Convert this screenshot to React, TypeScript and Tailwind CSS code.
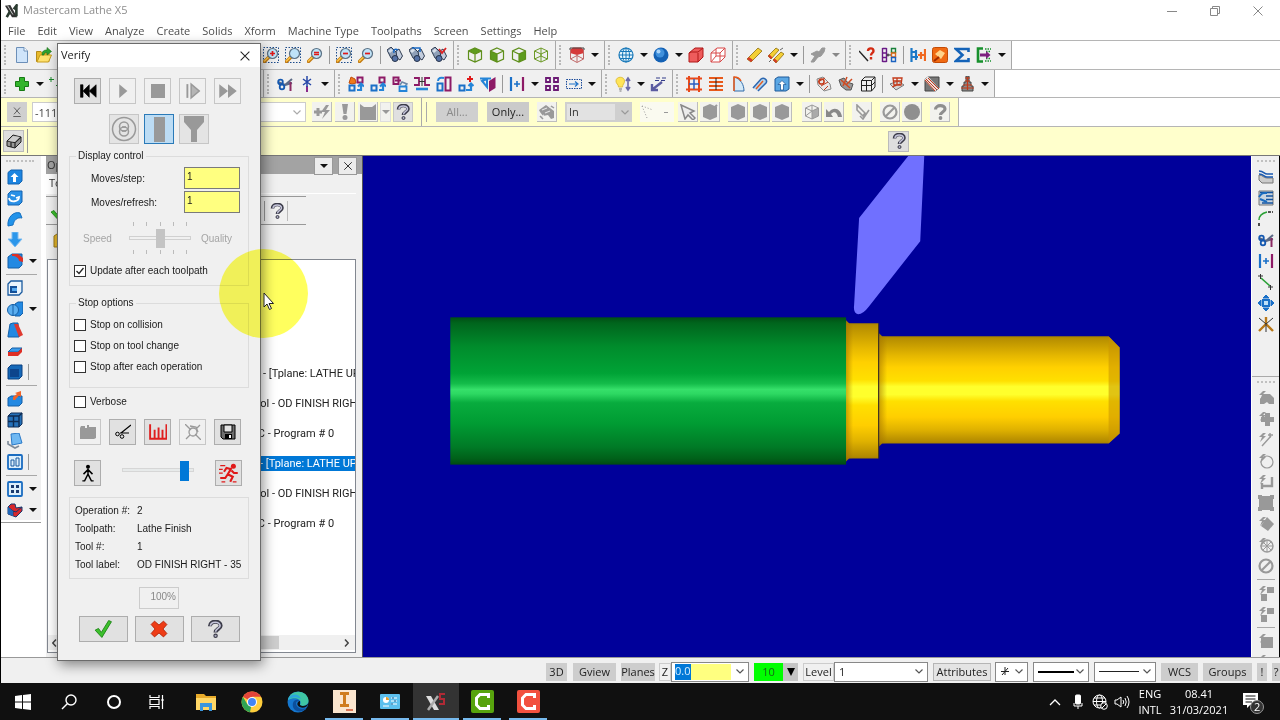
import React from 'react';

const segoe = "font-['Open_Sans','Noto_Sans',sans-serif]";

const magnifier = (
	<>
		<path d="M1.5 14.5 6 10" stroke="#c47b12" strokeWidth="3.4" strokeLinecap="round" />
		<path d="M1.5 14 5.6 10" stroke="#ffc94a" strokeWidth="1.4" strokeLinecap="round" />
		<circle cx="9.5" cy="6.5" r="5" fill="#bfe2f7" stroke="#5b7184" strokeWidth="1.2" />
	</>
);
const dottedBox = (
	<rect x=".5" y=".5" width="15" height="15" stroke="#1c4c8c" strokeDasharray="1.5 1.5" />
);
const cubeLines = 'M8 1 14.5 4V12L8 15 1.5 12V4ZM1.5 4 8 7 14.5 4M8 7V15';
const binoculars = (
	<>
		<path d="M0 3 4 0 11 7 9 13 4 11Z" fill="#8fa0b8" stroke="#2f3c52" />
		<path d="M1 4 4 1.5 6 3.5 3 6Z" fill="#d8e0ea" />
		<path d="M9 4 12 2 15.5 9 13 13 10 11Z" fill="#c3cddd" stroke="#2f3c52" />
		<circle cx="8" cy="11.5" r="3" fill="#5572a6" stroke="#25324a" />
	</>
);
const question = (
	<>
		<path
			d="M3.5 5.5C3.5 .2 13 .2 13 5 13 8 8.5 8 8.5 11"
			stroke="#3c3c4a"
			strokeWidth="3.6"
		/>
		<path d="M4 5.2C4 1 12.5 1 12.5 5 12.5 7.5 8.5 7.5 8.5 10.5" stroke="#c5c5da" strokeWidth="1.5" />
		<circle cx="8.5" cy="14" r="1.5" fill="#a9a9bd" stroke="#3c3c4a" />
	</>
);
const hexagon = <path d="M8 0 15 3V13L8 16 1 13V3Z" fill="#999" />;
const bolt = <path d="M5 1 1 5H4L2 10 8 4H5L8 1Z" fill="#999" />;
const greyLines = { stroke: '#999', strokeWidth: 1.4 };

const icons: Record<string, React.ReactNode> = {
	newFile: (
		<>
			<path d="M2.5.5H10L13.5 4V15.5H2.5Z" fill="#cfe4fa" stroke="#6c8fb8" />
			<path d="M10 .5V4H13.5" fill="#fff" stroke="#6c8fb8" />
		</>
	),
	open: (
		<>
			<path d="M.5 14.5V4.5H5L6.5 6H13V14.5Z" fill="#e8b92a" stroke="#b48a18" />
			<path d="M1 15 4 8H15.5L12.5 15Z" fill="#ffe26e" stroke="#c79c1c" />
			<path d="M6 8C6 4 8 3 11 3V.5L15.5 4.5 11 8V5.5C8.5 5.5 8 6.5 8 8Z" fill="#2fa32f" stroke="#1b701b" strokeWidth=".6" />
		</>
	),
	zoomIn: <>{dottedBox}{magnifier}<path d="M9.5 4V9M7 6.5H12" stroke="#e01919" strokeWidth="1.7" /></>,
	zoomWin: <>{dottedBox}{magnifier}</>,
	zoomTarget: <>{magnifier}<path d="M7 5.5H12M7 7.5H12" stroke="#e01919" strokeWidth="1.4" /></>,
	zoomOutWin: <>{dottedBox}{magnifier}<path d="M7 6.5H12" stroke="#e01919" strokeWidth="1.7" /></>,
	zoomOut: <>{magnifier}<path d="M7 6.5H12" stroke="#e01919" strokeWidth="1.7" /></>,
	binocularBack: <>{binoculars}<path d="M11 3C8 1 6 3 7 6" stroke="#1768c4" strokeWidth="1.5" /></>,
	binocularNext: <>{binoculars}<path d="M3 1H11V5" stroke="#1768c4" strokeWidth="1.5" /></>,
	binocularCheck: <>{binoculars}<path d="M8 2 11 6 15 1" stroke="#d22" strokeWidth="1.8" /></>,
	cubeTop: <><path d="M1.5 4 8 1 14.5 4 8 7Z" fill="#5e9c1e" /><path d={cubeLines} stroke="#5e8f1a" strokeWidth="1.2" /></>,
	cubeFront: <><path d="M1.5 4 8 7V15L1.5 12Z" fill="#5e9c1e" /><path d={cubeLines} stroke="#5e8f1a" strokeWidth="1.2" /></>,
	cubeRight: <><path d="M14.5 4 8 7V15L14.5 12Z" fill="#5e9c1e" /><path d={cubeLines} stroke="#5e8f1a" strokeWidth="1.2" /></>,
	cubeIso: <path d={cubeLines + 'M1.5 12 8 9 14.5 12M8 1V9'} stroke="#6c9a26" />,
	cubeRed: (
		<>
			<path d="M1 3 4 .5H12L15 3V6L8 8 1 6Z" fill="#d63a3a" />
			<path d="M1.5 3V12L8 15.5 14.5 12V3M8 7V15M1.5 12 8 8.5 14.5 12" stroke="#c06868" />
			<path d="M1 3V1H15V3" stroke="#444" />
		</>
	),
	globe: (
		<>
			<circle cx="8" cy="8" r="7" fill="#e4f5fd" stroke="#1677b8" strokeWidth="1.2" />
			<path d="M1 8H15M8 1V15M2.5 4.5H13.5M2.5 11.5H13.5" stroke="#1677b8" />
			<ellipse cx="8" cy="8" rx="3.5" ry="7" stroke="#1677b8" />
		</>
	),
	sphere: (
		<>
			<circle cx="8" cy="8" r="7.5" fill="#1461b4" />
			<circle cx="7" cy="6" r="4.5" fill="#3f90dc" />
			<circle cx="5.5" cy="4.5" r="2" fill="#a9d4fa" />
		</>
	),
	redSolid: (
		<>
			<path d="M1 6 7 1H15V10L10 15H1Z" fill="#ee5c5c" stroke="#b01818" />
			<path d="M1 6 3 5H10L15 1M10 6V15" stroke="#b01818" />
		</>
	),
	redWire: (
		<>
			<path d="M1 6 7 1H15V10L10 15H1Z" fill="#fff" stroke="#d84848" />
			<path d="M1 6H10L15 1M10 6V15M6 2V9L1 15M6 9H15" stroke="#d84848" />
		</>
	),
	eraser: (
		<>
			<path d="M1 12 12 1 16 4 5 15Z" fill="#f4cf35" stroke="#8d6d0e" strokeWidth=".8" />
			<path d="M1 12 3 10 7 13 5 15Z" fill="#d33b2a" />
		</>
	),
	eraserTwo: (
		<>
			<path d="M0 9 8 1 11 3 3 12Z" fill="#f4cf35" stroke="#8d6d0e" strokeWidth=".8" />
			<path d="M5 13 13 5 16 7 8 16Z" fill="#f4cf35" stroke="#8d6d0e" strokeWidth=".8" />
			<path d="M0 9 1.5 7.5 4.5 10.5 3 12ZM5 13 6.5 11.5 9.5 14 8 16Z" fill="#d33b2a" />
			<path d="M1 15 3 13M12 3 15 1" stroke="#666" />
		</>
	),
	undelete: <path d="M1 15 5 9 1 7 7 4 9 5 12 1H15L14 5 11 9 8 10 4 15Z" fill="#999" stroke="#999" />,
	analyzeHelp: (
		<>
			<path d="M0 4 9 14" stroke="#222" strokeWidth="1.4" />
			<path d="M9 4C9 .5 14.5 .5 14.5 4 14.5 6 12 6 12 8.5M12 10V12.5" stroke="#d32a12" strokeWidth="2.4" />
		</>
	),
	analyzeChain: (
		<>
			<path d="M1.5 1V15M5.5 1V15M1.5 1.5H5.5M1.5 6H5.5M1.5 10.5H5.5M1.5 14.5H5.5" stroke="#6a1b86" strokeWidth="1.4" />
			<path d="M6 8H10M7 6.5V9.5" stroke="#222" />
			<path d="M10.5 1.5H14.5V5.5H10.5Z" stroke="#19803a" strokeWidth="1.4" />
			<path d="M10.5 6H14.5V10H10.5Z" stroke="#e06b1a" strokeWidth="1.4" />
			<path d="M10.5 10.5H14.5V14.5H10.5Z" stroke="#1b62c0" strokeWidth="1.4" />
		</>
	),
	analyzeDist: (
		<>
			<path d="M1.5 1V15M6 3V13M1 5H7M1 10H8" stroke="#1a78c8" strokeWidth="2.2" />
			<path d="M15 2V14M11 5V12M8 8H15" stroke="#f06820" strokeWidth="2.2" />
		</>
	),
	orangeTag: (
		<>
			<rect x=".5" y=".5" width="15" height="15" rx="2" fill="#f06a12" stroke="#c34b06" />
			<path d="M3 7 8 3 13 6 9 12Z" fill="#ffd38a" />
			<path d="M2 14 7 10" stroke="#a02b00" strokeWidth="2" />
		</>
	),
	sigma: <path d="M14.5 5V2H2L8.5 8 2 14H14.5V11" stroke="#1463b8" strokeWidth="2.6" />,
	greenBracket: (
		<>
			<path d="M7 1.5H2V14.5H7" stroke="#17902c" strokeWidth="2.6" />
			<path d="M9 2H15M9 14H15M10 4.5H15M10 11.5H15" stroke="#17902c" strokeWidth="1.5" strokeDasharray="1.5 1" />
			<path d="M4 6.5H10V4L14.5 8 10 12V9.5H4Z" fill="#7d1f7e" />
		</>
	),
	plus: <path d="M5.5 1.5H10.5V5.5H14.5V10.5H10.5V14.5H5.5V10.5H1.5V5.5H5.5Z" fill="#33b52c" stroke="#167a14" />,
	plusSmall: <path d="M2 1V6M0 3.5H5M7 9 10 12" stroke="#1d8a2c" />,
	trim: (
		<>
			<path d="M1 6 8 9 15 3M8 9 15 7" stroke="#5c6a86" strokeWidth="2" />
			<circle cx="3.5" cy="6" r="2.3" stroke="#1458b0" strokeWidth="1.8" />
			<circle cx="5" cy="11" r="2.3" stroke="#1458b0" strokeWidth="1.8" />
			<path d="M13.5 6V15" stroke="#8b2a63" strokeWidth="2" />
		</>
	),
	breakStar: (
		<>
			<path d="M8 10V16" stroke="#8b2a8b" strokeWidth="2" />
			<path d="M8 0V11M4 3 12 9M12 3 4 9" stroke="#2647a8" strokeWidth="1.5" />
		</>
	),
	xfDynamic: (
		<>
			<path d="M1 7 3 1 7 3 8 7 4 8Z" fill="#ee7a1a" stroke="#c14e0a" />
			<path d="M9.5 1.5H14.5V6.5H9.5Z" stroke="#8d1a66" strokeWidth="2" />
			<path d="M1.5 9.5H6.5V14.5H1.5Z" stroke="#1a70c8" strokeWidth="2" />
			<path d="M9 14H13V8M10 10.5 13 7.5 16 10.5" stroke="#2585d8" strokeWidth="2.2" />
		</>
	),
	xfTranslate: (
		<>
			<path d="M9.5 1.5H14.5V6.5H9.5Z" stroke="#8d1a66" strokeWidth="2" />
			<path d="M1.5 9.5H6.5V14.5H1.5Z" stroke="#1a70c8" strokeWidth="2" />
			<path d="M9 14H13V8M10 10.5 13 7.5 16 10.5" stroke="#2585d8" strokeWidth="2.2" />
		</>
	),
	xfTranslate3D: (
		<>
			<path d="M1.5 1.5H6.5V8H1.5ZM3 4.5H9" stroke="#8d1a66" strokeWidth="2" />
			<path d="M8 9 10 6 15 8 13 10" stroke="#6b87a8" strokeWidth="1.5" />
			<path d="M7.5 10.5H14.5V15H7.5Z" stroke="#2585d8" strokeWidth="1.8" />
		</>
	),
	xfMirror: (
		<>
			<path d="M0 2H5V9H0M16 2H11V9H16" stroke="#8d1a66" strokeWidth="1.8" />
			<path d="M8 1V10M5 5.5H11" stroke="#333" />
			<path d="M2 13H14" stroke="#2585d8" strokeWidth="2.6" />
		</>
	),
	xfRotate: (
		<>
			<path d="M9.5 1.5H14.5V14.5H9.5Z" stroke="#8d1a66" strokeWidth="2" />
			<path d="M1.5 7.5H6.5V14.5H1.5Z" stroke="#1a70c8" strokeWidth="2" />
			<path d="M2 5C2 1.5 5 1.5 8 2" stroke="#2585d8" strokeWidth="2" />
		</>
	),
	xfScale: (
		<>
			<path d="M12 0V6M9 3H15" stroke="#e01919" strokeWidth="2" />
			<path d="M1.5 9.5H6.5V14.5H1.5Z" stroke="#1a70c8" strokeWidth="2" />
			<path d="M8 14H13V8M10.5 10 13 7.5 15.5 10" stroke="#2585d8" strokeWidth="2.2" />
		</>
	),
	xfProject: (
		<>
			<path d="M9 5 15.5 1V12L9 16Z" fill="#8d1a66" />
			<path d="M0 2.5H11M2 5 7 3V11Z" stroke="#2585d8" strokeWidth="2" />
		</>
	),
	offset: (
		<>
			<path d="M2 1V15" stroke="#1a70c8" strokeWidth="2.2" />
			<path d="M14 1V15" stroke="#8d1a66" strokeWidth="2.2" />
			<path d="M5 8H11M8 5V11" stroke="#1a70c8" strokeWidth="1.6" />
		</>
	),
	array: (
		<path d="M2 2H6V6H2ZM10 2H14V6H10ZM2 10H6V14H2ZM10 10H14V14H10Z" stroke="#6b1a74" strokeWidth="1.8" />
	),
	roll: (
		<>
			<path d="M.5 3.5H15.5V12.5H.5Z" stroke="#1a4a9a" strokeDasharray="1.5 1" />
			<path d="M3 8H11M9 5.5 12 8 9 10.5" stroke="#1a70c8" strokeWidth="1.2" />
		</>
	),
	bulb: (
		<>
			<path d="M1 5C1 0 9.5 0 9.5 5 9.5 8 7.5 8 7.5 11H3.5C3.5 8 1 8 1 5Z" fill="#ffe558" stroke="#e0c040" />
			<path d="M4 13H7M4.5 15H6.5" stroke="#777" />
			<path d="M13 2V14M11 5 13 2 15 5M11 11 13 14 15 11" stroke="#6a6aa8" strokeWidth="1.6" />
		</>
	),
	levelMove: (
		<>
			<path d="M6 2H10M12 2H16M5 4.5H9M11 4.5H15" stroke="#333c8a" strokeWidth="1.2" />
			<path d="M12 6 3 13M2 8V14H8" stroke="#5a5aa0" strokeWidth="2.4" />
		</>
	),
	orangeFrame: (
		<>
			<path d="M3 0V16M13 0V16M0 2.5H16M0 13.5H16" stroke="#e8491a" strokeWidth="2" />
			<path d="M8 3V13M3 8H13" stroke="#2b5cc0" strokeWidth="1.5" />
		</>
	),
	orangeLines: (
		<>
			<path d="M1 2H15M1 6H15M1 10H15M1 14H15" stroke="#e8591a" strokeWidth="1.8" />
			<path d="M8 2V14" stroke="#222" />
		</>
	),
	revolve: (
		<>
			<path d="M4 15V1C11 3 14 9 14 15Z" fill="#d4e9f8" stroke="#2f6aa8" />
			<path d="M4 15V1C8 1 10 3 11 5" stroke="#e8591a" strokeWidth="1.5" />
		</>
	),
	sweep: (
		<>
			<path d="M1 12 9 3C12 1 16 4 14 7L6 15" fill="#b5d5ee" stroke="#2b66b0" strokeWidth="1.5" />
			<path d="M4 13 11 5" stroke="#e8591a" strokeWidth="1.3" />
		</>
	),
	extrude: (
		<>
			<path d="M1 3 4 1H15V13L12 15H1Z" fill="#5ba7e4" stroke="#1f5a9a" />
			<path d="M6.5 14V8.5H4L8 4.5 12 8.5H9.5V14Z" fill="#fff" stroke="#1f5a9a" strokeWidth=".8" />
		</>
	),
	surfA: (
		<>
			<path d="M1 3 7 1 14 8 15 13 8 15 2 9Z" fill="#e8e8e8" stroke="#888" />
			<path d="M2 6 9 2M5 10 12 6M8 14 12 10" stroke="#c33a1a" />
			<circle cx="5.5" cy="5.5" r="2.6" stroke="#c33a1a" strokeWidth="1.5" />
		</>
	),
	surfB: (
		<>
			<path d="M1 4 6 2 9 6 15 8 13 14 8 14 3 10Z" fill="#999" stroke="#555" />
			<path d="M3 4 12 12M9 1 5 10M14 3 8 9" stroke="#d04a20" strokeWidth="1.5" />
		</>
	),
	wireCube: <path d="M1.5 4.5 5 1H15V11L11.5 15H1.5ZM1.5 4.5H11.5V15M11.5 4.5 15 1M6.5 4.5V15M1.5 9.5H11.5L15 6" stroke="#222" />,
	pathA: (
		<>
			<path d="M1 8 9 5 15 9 7 14Z" fill="#d5d5d5" stroke="#777" />
			<path d="M4 2H13L12 9H5ZM4 5H13M8 2V9M3 11 11 8" stroke="#c33a1a" strokeWidth="1.3" />
		</>
	),
	pathB: (
		<>
			<path d="M1 3 4 1H15V12L12 15H1Z" fill="#777" stroke="#444" />
			<path d="M2 2 13 14" stroke="#e8e0e0" strokeWidth="5" />
			<path d="M4 2 15 13M1 4 11 15M2 3 13 14" stroke="#c33a1a" />
		</>
	),
	pathC: (
		<>
			<path d="M7 0H10V6H12V10H14V15H3V10H5V6H7Z" fill="#8a8a8a" stroke="#444" />
			<path d="M6 2H11M6 5H11M4 9H13M2 12H15M8.5 1V14" stroke="#c33a1a" strokeWidth="1.2" />
		</>
	),
	fastPoint: <><path d="M0 8H8M4 4V12" stroke="#999" strokeWidth="3" /><path d="M12 1 7 8H11L8 15 16 6H12L15 1Z" fill="#999" /></>,
	bang: <><path d="M5 0H11L9.5 10H6.5Z" fill="#999" /><circle cx="8" cy="13.5" r="2.5" fill="#999" /></>,
	endpoints: <path d="M0 4V0L4 3H12L16 0V16H0Z" fill="#999" />,
	help: question,
	helpGrey: (
		<>
			<path d="M3.5 5.5C3.5 .5 13 .5 13 5 13 8 8.5 8 8.5 11" stroke="#8e8e8e" strokeWidth="3.2" />
			<circle cx="8.5" cy="14" r="1.9" fill="#8e8e8e" />
		</>
	),
	wrench: (
		<>
			<path d="M0 6 7 1 15 7 15 14 12 15 9 11 4 12 1 8Z" fill="#999" />
			<path d="M3 6 8 4M6 9 11 7M2 13 5 11M10 3H14" stroke="#e2e2e2" strokeWidth="1.2" />
			<path d="M1 12 4 15M12 2 15 4" stroke="#999" strokeWidth="1.5" />
		</>
	),
	corner: <path d="M2 2 13 6M2 2 7 14" stroke="#999" strokeDasharray="1 2" />,
	arrow: <path d="M1 1 14 7 10 9 15 14 13 16 8 11 5 15Z" fill="#ececec" stroke="#888" strokeWidth="1.5" />,
	hexSelect: <>{hexagon}<path d="M11 5 15 1" stroke="#999" strokeWidth="2" /></>,
	hex: hexagon,
	cubeGrey: <><path d="M8 7 14.5 4V12L8 15Z" fill="#aaa" /><path d={cubeLines + 'M8 7 1.5 12M8 1V7'} stroke="#999" /></>,
	back: <path d="M0 5V13H7L5 10C8 7 11 8 12 13H16C15 5 8 2 3 8Z" fill="#888" />,
	pencilCheck: <path d="M3 1 11 9 9 12 3 6ZM6 12 9 15 15 6" stroke="#999" strokeWidth="1.6" />,
	forbid: <><circle cx="8" cy="8" r="6.5" stroke="#999" strokeWidth="2.2" /><path d="M3.5 12.5 12.5 3.5" stroke="#999" strokeWidth="2.2" /></>,
	disc: <circle cx="8" cy="8" r="8" fill="#8f8f8f" />,
	block: (
		<>
			<path d="M1 8 7 2 15 4V9L9 15 1 13Z" fill="#999" stroke="#222" />
			<path d="M1 8 9 9.5 15 4M9 9.5V15M5 9V14" stroke="#222" strokeWidth="1.2" />
			<path d="M2 8 7 3 14 4 9 9Z" fill="#ccc" />
		</>
	),
	solidUp: (
		<>
			<path d="M1 3.5 4 1H15V12L12 15H1Z" fill="#1b84e0" stroke="#1263b0" />
			<path d="M6 13V8H3.5L7.5 4 11.5 8H9V13Z" fill="#fff" />
		</>
	),
	solidRevolve: (
		<>
			<path d="M1 4 4 1H15V12L12 15H1Z" fill="#2a90e6" stroke="#1263b0" />
			<path d="M2 8C3 13 12 12 12 7L9 8M4 5 8 6" stroke="#fff" strokeWidth="1.8" />
		</>
	),
	solidSweep: <path d="M1 15C0 6 7 0 13 2L15 7C10 6 7 9 6 14Z" fill="#2193ea" stroke="#1670c0" />,
	solidLoft: <path d="M5 0H11V7H15L8 15 1 7H5Z" fill="#2b96ea" stroke="#7bbcf2" />,
	solidFillet: (
		<>
			<path d="M1 4 5 1H15V12L12 15H1Z" fill="#2389e2" stroke="#155fa6" />
			<path d="M5 1H11L16 5V9L12 8C12 5 9 3 5 3Z" fill="#df2f25" />
		</>
	),
	solidShell: (
		<>
			<path d="M1 4 4 1H15V12L12 15H1Z" fill="#eaf4fc" stroke="#1a5a9e" strokeWidth="1.3" />
			<path d="M3 6H10V13H3Z" fill="#134f98" /><path d="M5 8H10V11H5Z" fill="#54a8ee" />
		</>
	),
	solidBool: (
		<>
			<path d="M8 3 11 1H16V12L13 15H8Z" fill="#2389e2" stroke="#155fa6" />
			<circle cx="6" cy="9" r="5.5" fill="#5aaef0" stroke="#155fa6" /><path d="M6 3V15" stroke="#155fa6" />
		</>
	),
	solidDraft: <><path d="M1 14 3 2 6 1H11L12 15H1Z" fill="#2389e2" stroke="#155fa6" /><path d="M7 2H11L16 13 12 15Z" fill="#df3a30" /></>,
	solidTrim: <><path d="M1 9 5 5H15L11 9Z" fill="#3b9bea" stroke="#155fa6" /><path d="M1 9H11L15 5V9L11 13H1Z" fill="#df2f25" /></>,
	solidBox: <><path d="M1 4 4 1H15V12L12 15H1Z" fill="#1568b8" stroke="#0c4080" /><path d="M3 5H12V13H3Z" fill="#0d448c" /></>,
	solidImport: <><path d="M1 7 4 5H15V12L12 15H1Z" fill="#2389e2" stroke="#155fa6" /><path d="M6 9V6L10 3 8 2 14 0 14 6 12 4.5 8 9Z" fill="#f0642a" /></>,
	solidGrid: <><path d="M1 4 4 1H15V12L12 15H1Z" fill="#2470b8" stroke="#102e58" /><path d="M1 4H12V15M6.5 4V15M1 9.5H12M12 4 15 1" stroke="#0e2a50" strokeWidth="1.4" /></>,
	solidSheet: <><path d="M4 1 12 0 15 10 5 12Z" fill="#6fb8f2" stroke="#2a7ac8" /><path d="M1 8V11L8 15 12 13" stroke="#7d8a98" strokeWidth="1.6" /></>,
	solidLayout: <><rect x="1" y="1" width="14" height="14" rx="1" fill="#dceefb" stroke="#1a6cc0" strokeWidth="1.8" /><path d="M4 6H7V12H4ZM9 4H12V12H9Z" stroke="#1a5a9e" /></>,
	solidViews: <><rect x="1" y="1" width="14" height="14" rx="1" fill="#dceefb" stroke="#1a6cc0" strokeWidth="1.8" /><path d="M4 4H7V7H4ZM9 4H12V7H9ZM4 9H7V12H4ZM9 9H12V12H9Z" fill="#1a3a6e" /></>,
	solidRed: <><path d="M1 5 4 2H8L9 6 15 5V9L9 15 1 12Z" fill="#d8262a" stroke="#16386e" /><path d="M1 5 6 9 9 10 15 5M6 9V13" stroke="#16386e" /><path d="M1 5 6 9V14L1 12Z" fill="#1e66b8" /></>,
	surfLayers: <><path d="M1 6C5 6 5 9 9 9H15V14H4L1 11Z" fill="#ccc" stroke="#777" /><path d="M1 2C6 2 6 5 9 5H15M1 5C6 5 6 8 9 8H15" stroke="#1a5ab0" strokeWidth="1.5" /></>,
	surfPocket: <><path d="M1 1H15V15H1Z" fill="#c8d4e0" stroke="#777" /><path d="M2 2.5H15M8 6H15M8 9.5H15M4 13H15" stroke="#15539e" strokeWidth="1.7" /><path d="M1 7C4 2 6 3 9 3M2 9 9 12" stroke="#1a6cc0" strokeWidth="2" /></>,
	filletLine: <><path d="M1 15V11M10 1H15" stroke="#222" strokeDasharray="3 1" strokeWidth="1.6" /><path d="M1 9C1 4 5 2 9 1" stroke="#2aa035" strokeWidth="1.5" /></>,
	lineEnds: <><path d="M3 4 12 12" stroke="#2aa035" strokeWidth="1.6" /><path d="M0 2H5M2.5 0V5M10 13H15M12.5 11V16" stroke="#333" /></>,
	moveFour: (
		<>
			<path d="M8 0 11 3H5ZM8 16 11 13H5ZM0 8 3 5V11ZM16 8 13 5V11Z" fill="#1a70c8" stroke="#1a70c8" />
			<path d="M4 4H12V12H4Z" fill="#1a70c8" /><path d="M6 6H10V10H6Z" fill="#bfe0f8" />
		</>
	),
	axes: <><path d="M8 9V1M8 8 1 15M8 8 15 15" stroke="#b87818" strokeWidth="2.4" /><path d="M1 2 8 8 15 2M8 8V16" stroke="#333" /></>,
	gCar: <><path d="M2 9 6 4H12L16 8V14H11L9 12 6 14H2Z" fill="#999" />{bolt}</>,
	gPlus: <><path d="M7 2H12V6H16V11H12V15H7V11H3V6H7Z" fill="#999" />{bolt}</>,
	gLine: <>{bolt}<path d="M4 14 13 4M12 1V6M10 3H15" {...greyLines} /></>,
	gCircle: <>{bolt}<circle cx="9" cy="9" r="6" {...greyLines} strokeWidth="1.2" /></>,
	gHook: <>{bolt}<path d="M4 12H14V3M4 15V9" {...greyLines} strokeWidth="2.4" /></>,
	gSquare: <path d="M0 0H4V1H12V0H16V4H15V12H16V16H12V15H4V16H0V12H1V4H0Z" fill="#999" />,
	gDiamond: <><path d="M9 1 16 8 10 15 3 10Z" fill="#999" />{bolt}</>,
	gGlobe: <>{bolt}<circle cx="9" cy="9" r="6" {...greyLines} /><path d="M3 9H15M9 3V15M5 5 13 13M13 5 5 13" stroke="#999" /></>,
	gSteps: <>{bolt}<path d="M9 2H16V8H9ZM3 9H9V16H3Z" fill="#999" /></>,
	gBox: <><path d="M3 4H15V15H3Z" fill="#999" />{bolt}</>,
	greenCheck: <path d="M1 9 4 7.5 6.5 11 13 .5 15.5 1.5 7 15.5Z" fill="#3cc02c" stroke="#1c8414" strokeWidth=".8" />,
	redX: <path d="M1 4 4 1 8 4.5 12 1 15 4 11.5 8 15 12 12 15 8 11.5 4 15 1 12 4.5 8Z" fill="#ee3c16" stroke="#b32408" strokeWidth=".8" />,
	rewind: <path d="M2 3H4V13H2ZM9 3V13L4 8ZM14.5 3V13L9 8Z" fill="#000" stroke="#000" strokeWidth=".5" />,
	play: <path d="M5 2.5 11.5 8 5 13.5Z" fill="#999" />,
	stop: <rect x="1" y="1" width="14" height="14" fill="#999" />,
	step: <><path d="M3.5 2.5V13.5" stroke="#999" strokeWidth="1.5" /><path d="M6.5 2.5 13 8 6.5 13.5Z" stroke="#999" strokeWidth="1.2" fill="#b5b5b5" /></>,
	forward: <path d="M1 2.5 8 8 1 13.5ZM8 2.5 15 8 8 13.5Z" fill="#999" />,
	caseGrey: <path d="M0 4 1 2H5V4H7V1H9V3H16V14L14 15H0Z" fill="#999" />,
	cutter: <><path d="M16 1 6 9M14 9H5" stroke="#000" strokeWidth="1.2" /><circle cx="2.5" cy="10" r="1.8" stroke="#000" /><circle cx="7" cy="12.5" r="1.8" stroke="#000" /></>,
	ruler: <path d="M1 1V14H15.5V1M5 6V14M8.5 4V14M12 6V14" stroke="#df1f1f" strokeWidth="1.7" />,
	probe: <><circle cx="8" cy="8" r="4" stroke="#999" strokeWidth="1.3" /><path d="M0 0 6 6M10 10 16 16M15 1 11 5M5 11 1 15M5 2 11 3 13 8" stroke="#999" strokeWidth="1.3" /></>,
	save: <><path d="M1 1H15V15H3L1 13Z" fill="#6f6f6f" stroke="#000" /><path d="M4 1H12V8H4Z" fill="#e4e4e4" stroke="#000" /><path d="M5 10H12V15H5Z" fill="#000" /><path d="M9 11H11V14H9Z" fill="#fff" /></>,
	walk: <><circle cx="8" cy="2.5" r="1.8" fill="#000" /><path d="M8 4V9L5 15H3M8 9 11 15H13M8 5 4 9M8 5 12 9" stroke="#000" strokeWidth="1.3" /></>,
	run: <><circle cx="11.5" cy="2.5" r="2" fill="#e01919" /><path d="M10 4 7 9 11 11 9 15M7 9 5 12H1M10 5 6 4 4 7M10 6 12 8H15" stroke="#e01919" strokeWidth="1.7" /><path d="M1 2H5M0 5H3M0 8H3M2 15H5M11 15H14" stroke="#e01919" /></>,
	x: <path d="M3 3 13 13M13 3 3 13" stroke="#222" strokeWidth="1.2" />,
	lineX: <path d="M4 2 12 11M12 2 4 11M3 14H13" stroke="#555" strokeWidth="1.2" />,
};

const Icon = ({ name, className = 'size-4' }: { name: string; className?: string }) => (
	<svg viewBox="0 0 16 16" fill="none" className={`shrink-0 ${className}`} aria-hidden="true">
		{icons[name]}
	</svg>
);

const Caret = ({ color = '#111' }: { color?: string }) => (
	<svg viewBox="0 0 8 4" className="h-1 w-2" aria-hidden="true">
		<path d="M0 0H8L4 4Z" fill={color} />
	</svg>
);

const Chevron = ({ color = '#555' }: { color?: string }) => (
	<svg viewBox="0 0 8 5" className="pointer-events-none h-[5px] w-2" fill="none" aria-hidden="true">
		<path d="M.5.5 4 4 7.5.5" stroke={color} strokeWidth="1.2" />
	</svg>
);

/* '|' draws a divider, 'v' a drop-down arrow, 'V' a disabled one and '_' a blank stretch */
const ToolGroup = ({ items, blank, label }: { items: string; blank?: string; label: string }) => (
	<div
		role="toolbar"
		aria-label={label}
		className="flex items-center border-r border-[#a8a8a8] bg-[#f0f0f0] pr-[3px]"
	>
		<span className="mr-[5px] ml-[3px] h-5 border-l-2 border-dotted border-[#b8b8b8]" />
		{items.split(' ').map((item, index) => {
			if (item === '|') return <span key={index} className="mx-[3px] h-[18px] w-px bg-[#999]" />;
			if (item === 'v' || item === 'V')
				return (
					<button key={index} aria-label="More" className="flex w-[13px] justify-center">
						<Caret color={item === 'V' ? '#888' : '#111'} />
					</button>
				);
			if (item === '_') return <span key={index} className={blank} />;
			return (
				<button key={index} aria-label={item} className="flex w-[22px] justify-center">
					<Icon name={item} />
				</button>
			);
		})}
	</div>
);

const ToolColumn = ({ items, label }: { items: string[]; label: string }) => (
	<div role="toolbar" aria-label={label} className="flex flex-col bg-[#f0f0f0] pl-[5px]">
		<span className="mt-1 mb-1 w-4/5 border-t-2 border-dotted border-[#c0c0c0]" />
		{items.map((item, index) => {
			if (item === '-') return <span key={index} className="mt-[3px] mr-1 mb-0.5 h-px shrink-0 bg-[#a8a8a8]" />;
			const [name, extra] = item.split('+');
			return (
				<div key={index} className="flex h-[21px] shrink-0 items-center">
					<button aria-label={name} className="flex w-[18px] justify-center">
						<Icon name={name} />
					</button>
					{extra === 'v' && (
						<button aria-label={`${name} options`} className="ml-[5px]">
							<Caret />
						</button>
					)}
					{extra === 'bar' && <span className="ml-1 h-4 w-px bg-[#999]" />}
				</div>
			);
		})}
	</div>
);

const FlatButton = ({ name, className = 'ml-0.5' }: { name: string; className?: string }) => (
	<button
		aria-label={name}
		className={`flex size-5 shrink-0 items-center justify-center border-r border-b border-[#bdbdbd] bg-[#f2f2ee] ${className}`}
	>
		<Icon name={name} />
	</button>
);

const menus = ['File', 'Edit', 'View', 'Analyze', 'Create', 'Solids', 'Xform', 'Machine Type', 'Toolpaths', 'Screen', 'Settings', 'Help'];

const TitleBar = () => (
	<header className="bg-white">
		<div className="flex h-[21px] items-center pl-1">
			<svg viewBox="0 0 16 16" className="size-3.5" fill="none" aria-hidden="true">
				<path d="M0 2 6 1 14 15 8 15Z" fill="#333" />
				<path d="M14 1 10 6 13 2V14M2 15 6 8" stroke="#2b3b30" strokeWidth="3" />
				<path d="M3 2 9 12" stroke="#ddd" />
			</svg>
			<h1 className="ml-1 text-[11px] text-[#8d8d8d]">Mastercam Lathe X5</h1>
			<div className="mr-4 ml-auto flex gap-[31px] text-[#888]">
				<button aria-label="Minimize">
					<svg viewBox="0 0 12 12" className="size-3" stroke="currentColor"><path d="M1 6.5H11" /></svg>
				</button>
				<button aria-label="Restore">
					<svg viewBox="0 0 12 12" className="size-3" stroke="currentColor" fill="none"><path d="M1.5 3.5H8.5V10.5H1.5ZM3.5 3V1.5H10.5V8.5H9" /></svg>
				</button>
				<button aria-label="Close">
					<svg viewBox="0 0 12 12" className="size-3" stroke="currentColor"><path d="M1.5 1.5 10.5 10.5M10.5 1.5 1.5 10.5" /></svg>
				</button>
			</div>
		</div>
		<nav className="flex h-[19px] items-center gap-3 pl-[7px] text-[11px] text-[#4d4d4d]">
			{menus.map((menu) => (
				<button key={menu} className="leading-4">{menu}</button>
			))}
		</nav>
	</header>
);

const SelectionRibbon = () => (
	<div className="flex h-[29px] border-t border-[#b5b5b5] bg-white">
		<div className="flex items-center border-r border-[#b5b5b5] bg-[#ffffcc] pr-2">
			<button aria-label="X coordinate" className="ml-1.5 flex size-5 items-center justify-center bg-[#cfcfcf]">
				<Icon name="lineX" className="size-3" />
			</button>
			<input
				aria-label="X value"
				defaultValue="-111."
				className="ml-[5px] h-5 w-[110px] border border-[#ccc] bg-white px-0.5 text-[11px] text-[#444]"
			/>
			<div className="ml-[90px] flex h-5 w-[74px] items-center justify-end border border-[#ccc] bg-white pr-1">
				<Chevron color="#aaa" />
			</div>
			<FlatButton name="fastPoint" className="ml-1.5" />
			<FlatButton name="bang" className="ml-[3px]" />
			<FlatButton name="endpoints" className="ml-[3px]" />
			<button aria-label="Options" className="mx-0.5 flex h-5 w-[11px] items-center justify-center border border-[#ddd] bg-[#f2f2ee]">
				<Caret color="#999" />
			</button>
			<button aria-label="Help" className="flex size-5 items-center justify-center border border-[#c8c8c8] bg-[#e0e0e0]">
				<Icon name="help" />
			</button>
			<span className="ml-2 h-full w-px bg-[#aaa]" />
			<span className="ml-1 h-5 w-px bg-[#aaa]" />
			<button className="ml-[9px] h-5 w-[42px] bg-[#cfcfcf] text-[11px] text-[#8a8a8a]">All...</button>
			<button className="ml-[9px] h-5 w-[42px] bg-[#cacaca] text-[11px] text-[#222]">Only...</button>
			<FlatButton name="wrench" className="ml-2" />
			<div className="relative ml-2 flex h-5 w-[67px] items-center bg-[#cfcfcf] p-0.5">
				<select aria-label="Selection mode" className="h-4 w-12 appearance-none bg-[#e2e2e2] px-0.5 text-[11px] leading-4 text-[#333]">
					<option>In</option>
				</select>
				<span className="ml-1.5"><Chevron color="#999" /></span>
			</div>
			<div className="ml-2 flex h-5 w-[34px] items-center bg-[#fafaf0]">
				<Icon name="corner" />
				<span className="ml-2 h-px w-1 bg-[#999]" />
			</div>
			<FlatButton name="arrow" className="ml-1" />
			<FlatButton name="hexSelect" className="ml-0.5" />
			<FlatButton name="hex" className="ml-2" />
			<FlatButton name="hex" />
			<FlatButton name="hex" />
			<FlatButton name="cubeGrey" className="ml-2.5" />
			<FlatButton name="back" />
			<FlatButton name="pencilCheck" className="ml-2" />
			<FlatButton name="forbid" className="ml-2" />
			<FlatButton name="disc" />
			<FlatButton name="helpGrey" className="ml-2" />
		</div>
	</div>
);

const PromptRibbon = () => (
	<div className="flex h-[30px] items-center border-t border-b border-[#b5b5b5] border-b-[#777] bg-[#ffffcc]">
		<button aria-label="Solid" className="ml-0.5 flex h-[22px] w-[21px] items-center justify-center border border-[#bbb] bg-[#dedede]">
			<Icon name="block" />
		</button>
		<span className="ml-[3px] h-6 w-px bg-[#999]" />
		<div className="flex-1" />
		<button aria-label="Help" className="mr-[371px] flex size-[21px] items-center justify-center border border-[#bbb] bg-[#dedede]">
			<Icon name="help" />
		</button>
	</div>
);

const treeRows = [
	{ text: '- [Tplane: LATHE UPPER LEFT]', indent: 'left-[215px]' },
	{ text: 'Tool - OD FINISH RIGHT', indent: 'left-[200px]' },
	{ text: 'NC - Program # 0', indent: 'left-[202px]' },
	{ text: '- [Tplane: LATHE UPPER LEFT]', indent: 'left-[212px]', active: true },
	{ text: 'Tool - OD FINISH RIGHT', indent: 'left-[200px]' },
	{ text: 'NC - Program # 0', indent: 'left-[202px]' },
];

const OperationsPanel = () => (
	<section className="flex w-[316px] shrink-0 flex-col bg-[#f0f0f0]" aria-label="Operations Manager">
		<div className="flex h-[18px] items-center bg-[#a3a3a3] text-[11px] text-[#333]">
			<span className="w-[268px] shrink-0 pl-px">Op</span>
			<button aria-label="Menu" className="mt-0.5 flex h-[18px] w-[19px] shrink-0 items-center justify-center border border-[#999] bg-[#ececec]">
				<Caret />
			</button>
			<button aria-label="Close" className="mt-0.5 ml-[5px] flex h-[18px] w-[19px] shrink-0 items-center justify-center border border-[#999] bg-[#ececec]">
				<Icon name="x" className="size-3" />
			</button>
		</div>
		<div className="flex h-[19px] items-center">
			<button className="h-full w-20 bg-white px-[3px] text-left text-[11px] text-[#333]">To</button>
		</div>
		<div className="mr-1.5 border-t border-white">
			<div className="mt-0.5 flex h-[29px] w-[260px] items-center border-y border-[#999]">
				<button aria-label="Select all" className="ml-1"><Icon name="greenCheck" /></button>
				<span className="ml-auto h-5 w-px bg-[#999]" />
				<button aria-label="Help" className="mr-0.5 ml-1"><Icon name="help" /></button>
				<span className="mr-[18px] h-5 w-px bg-[#bbb]" />
			</div>
			<div className="mt-2 ml-1.5 h-4">
				<svg viewBox="0 0 16 16" className="size-4" aria-hidden="true"><path d="M2 3 5 1H12V14H2Z" fill="#e8b92a" stroke="#9c7a18" /></svg>
			</div>
		</div>
		<div className="mt-2.5 mr-1.5 mb-1 ml-px flex flex-1 flex-col border border-[#828790] bg-white">
			<ul className="mt-[106px] flex flex-col font-[Roboto,'Noto_Sans',sans-serif] text-[11px] text-[#222]">
				{treeRows.map((row, index) => (
					<li key={index} className="relative h-[30px] overflow-hidden">
						<span
							className={`absolute right-0 h-[15px] leading-[15px] whitespace-nowrap ${row.indent} ${
								row.active ? 'bg-[#0078d7] text-white' : ''
							}`}
						>
							{row.text}
						</span>
					</li>
				))}
			</ul>
			<div className="mt-auto mb-0.5 flex h-[15px] items-center bg-[#f0f0f0] text-[#444]">
				<button aria-label="Scroll left" className="px-1">
					<svg viewBox="0 0 5 8" className="h-2 w-[5px]" fill="none" stroke="currentColor" strokeWidth="1.5"><path d="M4 .5.8 4 4 7.5" /></svg>
				</button>
				<span className="h-[13px] w-[218px] bg-[#cdcdcd]" />
				<button aria-label="Scroll right" className="ml-auto px-1.5">
					<svg viewBox="0 0 5 8" className="h-2 w-[5px]" fill="none" stroke="currentColor" strokeWidth="1.5"><path d="M1 .5 4.2 4 1 7.5" /></svg>
				</button>
			</div>
		</div>
	</section>
);

const Viewport = () => (
	<main className="min-w-0 flex-1 border-l border-[#555] bg-[#00009a]">
		<svg viewBox="0 0 888 500" preserveAspectRatio="xMidYMin slice" className="block size-full" role="img" aria-label="Lathe stock and tool">
			<defs>
				<linearGradient id="green" x1="0" y1="0" x2="0" y2="1">
					<stop offset="0" stopColor="#004f14" />
					<stop offset=".04" stopColor="#00651d" />
					<stop offset=".2" stopColor="#008c2c" />
					<stop offset=".38" stopColor="#00a336" />
					<stop offset=".45" stopColor="#14bc4a" />
					<stop offset=".49" stopColor="#36e06a" />
					<stop offset=".52" stopColor="#2dd862" />
					<stop offset=".58" stopColor="#08ac3e" />
					<stop offset=".72" stopColor="#009c33" />
					<stop offset=".88" stopColor="#007a26" />
					<stop offset=".96" stopColor="#006019" />
					<stop offset="1" stopColor="#004a12" />
				</linearGradient>
				<linearGradient id="gold" x1="0" y1="0" x2="0" y2="1">
					<stop offset="0" stopColor="#8a6a00" />
					<stop offset=".04" stopColor="#b48c00" />
					<stop offset=".2" stopColor="#e6b800" />
					<stop offset=".3" stopColor="#ffd000" />
					<stop offset=".42" stopColor="#ffe000" />
					<stop offset=".47" stopColor="#ffff2c" />
					<stop offset=".54" stopColor="#ffff2c" />
					<stop offset=".6" stopColor="#ffe000" />
					<stop offset=".74" stopColor="#ffce00" />
					<stop offset=".85" stopColor="#e0b200" />
					<stop offset=".96" stopColor="#b08800" />
					<stop offset="1" stopColor="#806000" />
				</linearGradient>
				<linearGradient id="shade" x1="0" y1="0" x2="1" y2="0">
					<stop offset="0" stopColor="#a07000" stopOpacity=".55" />
					<stop offset="1" stopColor="#a07000" stopOpacity="0" />
				</linearGradient>
			</defs>
			<path d="M545 0H561L557 85 506 150Q500 158 495 158 490 157 491 149L496 62Z" fill="#7070ff" />
			<path d="M482 163 486 167H515V302H486L482 306Z" fill="url(#gold)" />
			<rect x="88" y="161" width="395" height="147" fill="url(#green)" />
			<rect x="483" y="167" width="7" height="135" fill="url(#shade)" />
			<path d="M516 177 519 180H745L756 191V277L745 287H519L516 290Z" fill="url(#gold)" />
			<rect x="516" y="180" width="8" height="107" fill="url(#shade)" />
			<path d="M745 180 756 191V277L745 287Z" fill="#c89400" fillOpacity=".55" />
			<path d="M515.5 167V302" stroke="#4a3a10" />
		</svg>
	</main>
);

const solids = ['solidUp', 'solidRevolve', 'solidSweep', 'solidLoft', 'solidFillet+v', '-', 'solidShell', 'solidBool+v', 'solidDraft', 'solidTrim', 'solidBox+bar', '-', 'solidImport', 'solidGrid', 'solidSheet', 'solidLayout+bar', '-', 'solidViews+v', 'solidRed+v'];
const recent = ['surfLayers', 'surfPocket', 'filletLine', 'trim', 'offset', 'lineEnds', 'moveFour', 'axes'];
const quickMasks = ['gCar', 'gPlus', 'gLine', 'gCircle', 'gHook', 'gSquare', 'gDiamond', 'gGlobe', 'forbid', '-', 'gSteps', 'gSteps', '-', 'gBox', 'gBox'];

const StatusBox = ({ label, className, children }: { label: string; className: string; children?: React.ReactNode }) => (
	<button aria-label={label} className={`flex h-5 items-center justify-between border border-[#888] bg-white px-1 ${className}`}>
		{children}
		<Chevron />
	</button>
);

const statusButton = 'h-[18px] bg-[#cdcdcd] text-[11px] leading-[18px] text-[#222]';

const StatusBar = () => (
	<footer className="flex h-[26px] items-center justify-end overflow-hidden border-t border-[#999] bg-[#f0f0f0] pt-0.5 text-[#222]">
		<button className={`${statusButton} w-[21px]`}>3D</button>
		<button className={`${statusButton} ml-1.5 w-[43px]`}>Gview</button>
		<button className={`${statusButton} ml-[5px] w-[34px]`}>Planes</button>
		<label htmlFor="z-depth" className="ml-1 h-[18px] w-3 border border-[#ccc] text-center text-[11px] leading-4">Z</label>
		<div className="flex h-5 w-[78px] items-center border border-[#888] bg-white pr-1 pl-[3px]">
			<div className="flex w-14 bg-[#ffff80]">
				<input id="z-depth" defaultValue="0.0" className="h-4 w-4 bg-[#0078d7] text-[11px] text-[#d9efff]" />
			</div>
			<span className="ml-auto"><Chevron /></span>
		</div>
		<button className="ml-[5px] h-[18px] w-[29px] bg-[#00ff00] text-[11px] leading-[18px] text-[#156615]">10</button>
		<button aria-label="Colour list" className="flex h-[18px] w-[15px] items-center justify-center bg-[#c4c4c4]">
			<svg viewBox="0 0 8 8" className="size-2" aria-hidden="true"><path d="M0 0H8L4 8Z" /></svg>
		</button>
		<label htmlFor="level" className="ml-[5px] h-[18px] w-[31px] border border-[#ccc] text-center text-[11px] leading-4">Level</label>
		<div className="relative flex h-5 w-[94px] items-center border border-[#888] bg-white">
			<select id="level" className="w-full appearance-none px-1 text-[11px] leading-4">
				<option>1</option>
			</select>
			<span className="absolute right-1"><Chevron /></span>
		</div>
		<button className="ml-[5px] h-[18px] w-[58px] border border-[#b5b5b5] bg-[#e4e4e4] text-[11px] leading-4">Attributes</button>
		<StatusBox label="Point style" className="ml-1 w-[33px]">
			<svg viewBox="0 0 10 10" className="size-2.5" stroke="#222"><path d="M5 0V8M1 4.500H9M2 8 8 1" /></svg>
		</StatusBox>
		<StatusBox label="Line style" className="ml-[5px] w-14"><span className="h-0.5 w-9 bg-black" /></StatusBox>
		<StatusBox label="Line width" className="ml-[5px] w-[62px]"><span className="h-px w-10 bg-[#222]" /></StatusBox>
		<button className={`${statusButton} ml-[5px] w-[37px]`}>WCS</button>
		<button className={`${statusButton} ml-[5px] w-[49px]`}>Groups</button>
		<button className={`${statusButton} ml-[5px] w-2.5`}>!</button>
		<button className={`${statusButton} ml-[5px] w-2`}>?</button>
	</footer>
);

const Camtasia = ({ color, mark }: { color: string; mark: string }) => (
	<svg viewBox="0 0 23 23" className="size-[23px]" fill="none" aria-hidden="true">
		<rect width="23" height="23" rx="2" fill={color} />
		<path d="M17.5 8V4.5H9L5.5 8V15L9 18.5H17.5V15" stroke={mark} strokeWidth="3" />
	</svg>
);

const apps = [
	{
		name: 'File Explorer',
		art: (
			<svg viewBox="0 0 20 18" className="h-[18px] w-5" aria-hidden="true">
				<path d="M0 1H8L10 3H20V17H0Z" fill="#e8ab2a" /><path d="M0 5H20V17H0Z" fill="#ffd766" />
				<path d="M4 18V10H16V18H13V14H7V18Z" fill="#3a96dd" />
			</svg>
		),
	},
	{
		name: 'Chrome',
		art: (
			<svg viewBox="0 0 22 22" className="size-[22px]" aria-hidden="true">
				<circle cx="11" cy="11" r="10.5" fill="#ffce3c" />
				<path d="M11 11 1.9 5.8A10.5 10.5 0 0 1 20.1 5.8H11Z" fill="#e2453a" />
				<path d="M11 11 9 21.3A10.5 10.5 0 0 1 1.9 5.8L6.5 13.6Z" fill="#2fa352" />
				<circle cx="11" cy="11" r="5" fill="#fff" /><circle cx="11" cy="11" r="4" fill="#4285f4" />
			</svg>
		),
	},
	{
		name: 'Edge',
		art: (
			<svg viewBox="0 0 22 22" className="size-[22px]" aria-hidden="true">
				<circle cx="11" cy="11" r="10.5" fill="#1577cf" />
				<path d="M1 9C3-2 20-2 21.5 9 22 15 15 16 13 14 16 8 8 5 1 9Z" fill="#3fc6a4" />
				<path d="M1 9C3 2 12 2 14 8 9 5 4 6 1 9Z" fill="#2ba6e0" />
				<path d="M9 12C9 17 15 19 19.5 17 15 23 4 21 6 12 7 8 12 8 12 10 10 10 9 11 9 12Z" fill="#0c4f9c" />
				<path d="M13 14C15 16 20 15 21.5 12 20 18 13 18 10.5 14 10 11 12 10 13 10Z" fill="#101010" />
			</svg>
		),
	},
	{
		name: 'Inventor',
		open: true,
		art: (
			<svg viewBox="0 0 23 23" className="size-[23px]" aria-hidden="true">
				<rect width="23" height="23" fill="#fbe6cf" />
				<path d="M7 2H16V5H13V14H16V17H7V14H10V5H7Z" fill="#d07c1e" />
				<path d="M13 20H20" stroke="#d0502e" strokeWidth="1.5" />
			</svg>
		),
	},
	{
		name: 'Control Panel',
		open: true,
		art: (
			<svg viewBox="0 0 20 15" className="h-[15px] w-5" fill="none" aria-hidden="true">
				<rect width="20" height="15" rx="1" fill="#5cc0ee" />
				<circle cx="6" cy="6" r="3" fill="#fff" /><path d="M6 6V3A3 3 0 0 1 9 6Z" fill="#e59a2a" />
				<path d="M11 4H17M11 7H17M11 10H17M3 12H9" stroke="#fff" /><path d="M13 3V5M15 6V8M12 9V11" stroke="#165f96" />
			</svg>
		),
	},
	{
		name: 'Mastercam',
		open: true,
		active: true,
		art: (
			<svg viewBox="0 0 22 22" className="size-[22px]" fill="none" aria-hidden="true">
				<path d="M1 5H6L14 19H9Z" fill="#ddd" /><path d="M13 5 3 19" stroke="#aaa" strokeWidth="2.5" />
				<path d="M20 3H15V8H19V13H14" stroke="#b02a35" strokeWidth="2" />
			</svg>
		),
	},
	{ name: 'Camtasia', open: true, art: <Camtasia color="#57a30d" mark="#fff" /> },
	{ name: 'Camtasia Recorder', open: true, art: <Camtasia color="#f2513f" mark="#fff" /> },
];

const Taskbar = () => (
	<nav aria-label="Taskbar" className="flex h-[37px] shrink-0 items-stretch bg-[#101010] text-white">
		<button aria-label="Start" className="flex w-[46px] items-center justify-center">
			<svg viewBox="0 0 16 16" className="size-4" fill="#fff"><path d="M0 2 7 1V7.5H0ZM8 1 16 0V7.5H8ZM0 8.5H7V15L0 14ZM8 8.5H16V16L8 15Z" /></svg>
		</button>
		<button aria-label="Search" className="flex w-[46px] items-center justify-center">
			<svg viewBox="0 0 16 16" className="size-4" fill="none" stroke="#fff" strokeWidth="1.4"><circle cx="10" cy="6" r="5" /><path d="M6.5 9.5 1 15" /></svg>
		</button>
		<button aria-label="Cortana" className="flex w-[43px] items-center justify-center">
			<span className="size-3.5 rounded-full border-2 border-white" />
		</button>
		<button aria-label="Task view" className="mr-1 flex w-11 items-center justify-center">
			<svg viewBox="0 0 16 16" className="size-4" fill="none" stroke="#fff" strokeWidth="1.2"><path d="M1 1V3.5H10V1M1 5.5H10V10.5H1ZM1 15V12.5H10V15M13.5 1V15M12 6H15" /></svg>
		</button>
		{apps.map((app) => (
			<button
				key={app.name}
				aria-label={app.name}
				className={`relative flex w-[46px] items-center justify-center ${app.active ? 'bg-[#333]' : ''}`}
			>
				{app.art}
				{app.open && (
					<span className={`absolute bottom-0 h-0.5 bg-[#76b9ed] ${app.active ? 'inset-x-0' : 'inset-x-1'}`} />
				)}
			</button>
		))}
		<div className="ml-auto flex items-center">
			<svg viewBox="0 0 12 8" className="w-3" fill="none" stroke="#fff" strokeWidth="1.3"><path d="M1 7 6 2 11 7" /></svg>
			<svg viewBox="0 0 12 16" className="ml-[11px] h-4 w-3" fill="none" stroke="#fff"><rect x="3.5" y="1" width="5" height="9" rx="1" fill="#fff" /><path d="M2 9V12H10V9M6 12V15" /></svg>
			<svg viewBox="0 0 16 16" className="ml-2 size-4" fill="none" stroke="#fff">
				<circle cx="7.5" cy="7.5" r="6.5" /><ellipse cx="7.5" cy="7.5" rx="3" ry="6.5" /><path d="M1 7.5H14M2 4H13M2 11H9" />
				<circle cx="12" cy="12" r="3.3" fill="#101010" /><path d="M10 14 14 10" />
			</svg>
			<svg viewBox="0 0 16 16" className="ml-1.5 size-4" fill="none" stroke="#fff"><path d="M1 6H3L7 3V13L3 10H1ZM9 6Q10.5 8 9 10M11 4Q13.5 8 11 12M13 2Q17 8 13 14" /></svg>
			<button className="ml-[7px] w-[26px] text-center text-[11px] leading-4">ENG<br />INTL</button>
			<button className="ml-1 w-16 text-center text-[11px] leading-4 whitespace-nowrap">08.41<br />31/03/2021</button>
			<button aria-label="Notifications" className="relative mr-[15px] ml-2.5 size-6">
				<svg viewBox="0 0 24 24" className="size-6" fill="none">
					<path d="M2 3H17V15H9L6 18V15H2Z" fill="#fff" /><path d="M4.5 6H14.5M4.5 9H14.5M4.5 12H11" stroke="#101010" />
					<circle cx="16" cy="17" r="6.5" fill="#333" stroke="#999" />
				</svg>
				<span className="absolute top-[9px] left-[13px] text-[11px] leading-4">2</span>
			</button>
		</div>
	</nav>
);

const DialogButton = ({ name, disabled, className = 'w-[27px]', size }: { name: string; disabled?: boolean; className?: string; size?: string }) => (
	<button
		aria-label={name}
		disabled={disabled}
		className={`flex h-[26px] items-center justify-center border ${className} ${
			disabled ? 'border-[#c6c6c6] bg-[#f0f0f0]' : 'border-[#adadad] bg-[#e1e1e1]'
		}`}
	>
		<Icon name={name} className={size} />
	</button>
);

const Check = ({ label, checked }: { label: string; checked?: boolean }) => (
	<label className="flex h-[21px] items-center gap-1">
		<span className="relative flex size-3">
			<input
				type="checkbox"
				defaultChecked={checked}
				className="peer size-3 appearance-none border border-[#333] bg-white"
			/>
			<svg viewBox="0 0 12 12" className="pointer-events-none absolute inset-0 hidden size-3 peer-checked:block" fill="none">
				<path d="M2.5 6 5 8.5 9.5 3" stroke="#222" strokeWidth="1.3" />
			</svg>
		</span>
		{label}
	</label>
);

const modeButton = 'flex size-[30px] items-center justify-center border';
const stepInput = 'h-[22px] w-14 border border-[#7a7a7a] bg-[#ffff80] px-0.5 pb-1';

const Ticks = () => (
	<div className="flex justify-between px-1">
		{[0, 1, 2, 3, 4].map((tick) => (
			<span key={tick} className="h-1 w-px bg-[#bbb]" />
		))}
	</div>
);

const info = [
	['Operation #:', '2'],
	['Toolpath:', 'Lathe Finish'],
	['Tool #:', '1'],
	['Tool label:', 'OD FINISH RIGHT - 35'],
];

const VerifyDialog = () => (
	<div
		role="dialog"
		aria-label="Verify"
		className="absolute top-[43px] left-[57px] w-[204px] border border-[#6b6b6b] bg-[#f0f0f0] pb-[18px] text-[#1a1a1a] shadow-[2px_4px_12px_rgba(0,0,0,0.45)]"
	>
		<div className="flex h-[23px] items-center justify-between bg-white pr-2 pl-[3px]">
			<h2 className="text-[11px]">Verify</h2>
			<button aria-label="Close"><Icon name="x" className="size-3.5" /></button>
		</div>
		<div className="px-[11px] font-['Liberation_Sans',Arial,sans-serif] text-[10px]">
			<div className="mt-[11px] flex gap-2 px-[5px]">
				<DialogButton name="rewind" size="size-5" />
				<DialogButton name="play" size="size-5" disabled />
				<DialogButton name="stop" disabled />
				<DialogButton name="step" size="size-5" disabled />
				<DialogButton name="forward" size="size-5" disabled />
			</div>
			<div className="mt-2.5 flex justify-center gap-[5px]">
				<button aria-label="Turbo" className={`${modeButton} border-[#c6c6c6] bg-[#e4e4e4]`}>
					<svg viewBox="0 0 26 26" className="size-[26px]" fill="none" stroke="#999" strokeWidth="1.5">
						<circle cx="13" cy="13" r="11.5" /><circle cx="13" cy="10.5" r="4.500" /><circle cx="13" cy="15.5" r="4.500" /><path d="M11 11H15M11 15H15" />
					</svg>
				</button>
				<button aria-label="Simulate tool" className={`${modeButton} border-[#2a7ab8] bg-[#bcdcf4]`}>
					<span className="h-[25px] w-[11px] bg-[#999]" />
				</button>
				<button aria-label="Simulate holder" className={`${modeButton} border-[#c6c6c6] bg-[#e4e4e4]`}>
					<svg viewBox="0 0 26 26" className="size-[26px]" fill="#999"><path d="M3 0H23V6L16 14V26H10V14L3 6Z" /></svg>
				</button>
			</div>
			<fieldset className="mt-1 h-[138px] border border-[#dcdcdc] px-1">
				<legend className="ml-0.5 px-0.5 leading-4">Display control</legend>
				<div className="mt-[3px] flex items-center justify-between pr-1 pl-[17px]">
					<label htmlFor="moves-step">Moves/step:</label>
					<input id="moves-step" defaultValue="1" className={stepInput} />
				</div>
				<div className="mt-0.5 flex items-center justify-between pr-1 pl-[17px]">
					<label htmlFor="moves-refresh">Moves/refresh:</label>
					<input id="moves-refresh" defaultValue="1" className={stepInput} />
				</div>
				<div className="mt-[11px] flex h-7 items-center pl-[9px] text-[#a5a5a5]">
					<label htmlFor="quality" className="w-[46px]">Speed</label>
					<div className="flex w-[62px] flex-col gap-0.5">
						<Ticks />
						<input
							id="quality"
							type="range"
							disabled
							className="h-5 w-full appearance-none bg-transparent [&::-webkit-slider-runnable-track]:h-1 [&::-webkit-slider-runnable-track]:border [&::-webkit-slider-runnable-track]:border-[#d0d0d0] [&::-webkit-slider-thumb]:-mt-2 [&::-webkit-slider-thumb]:h-[19px] [&::-webkit-slider-thumb]:w-[9px] [&::-webkit-slider-thumb]:appearance-none [&::-webkit-slider-thumb]:bg-[#c4c4c4]"
						/>
						<Ticks />
					</div>
					<span className="ml-2.5">Quality</span>
				</div>
				<div className="mt-2"><Check label="Update after each toolpath" checked /></div>
			</fieldset>
			<fieldset className="mt-[9px] h-[93px] border border-[#dcdcdc] px-1">
				<legend className="ml-0.5 px-0.5 leading-4">Stop options</legend>
				<div className="mt-[3px]">
					<Check label="Stop on collision" />
					<Check label="Stop on tool change" />
					<Check label="Stop after each operation" />
				</div>
			</fieldset>
			<div className="mt-[3px] px-[5px]"><Check label="Verbose" /></div>
			<div className="mt-[7px] flex gap-2 px-[5px]">
				<DialogButton name="caseGrey" disabled />
				<DialogButton name="cutter" />
				<DialogButton name="ruler" size="size-[18px]" />
				<DialogButton name="probe" disabled />
				<DialogButton name="save" />
			</div>
			<div className="mt-[15px] flex items-center justify-between pr-[7px] pl-[5px]">
				<DialogButton name="walk" size="size-[18px]" />
				<input
					type="range"
					aria-label="Verify speed"
					defaultValue={94}
					className="mb-1.5 h-5 w-[72px] appearance-none bg-transparent [&::-webkit-slider-runnable-track]:h-1 [&::-webkit-slider-runnable-track]:border [&::-webkit-slider-runnable-track]:border-[#d6d6d6] [&::-webkit-slider-runnable-track]:bg-[#e7eaea] [&::-webkit-slider-thumb]:-mt-2 [&::-webkit-slider-thumb]:h-5 [&::-webkit-slider-thumb]:w-[9px] [&::-webkit-slider-thumb]:appearance-none [&::-webkit-slider-thumb]:bg-[#0078d7]"
				/>
				<DialogButton name="run" size="size-5" />
			</div>
			<dl className="mt-[11px] grid grid-cols-[62px_1fr] border border-[#dcdcdc] py-1 pl-[5px] leading-[18px] whitespace-nowrap">
				{info.map(([term, value]) => (
					<React.Fragment key={term}>
						<dt>{term}</dt>
						<dd>{value}</dd>
					</React.Fragment>
				))}
			</dl>
			<output className="mx-auto mt-2 block h-[22px] w-10 border border-[#ccc] pr-0.5 text-right leading-[18px] text-[#888]">
				100%
			</output>
			<div className="mt-[7px] flex justify-center gap-[7px]">
				<DialogButton name="greenCheck" className="w-[49px]" size="size-[18px]" />
				<DialogButton name="redX" className="w-[49px]" size="size-[18px]" />
				<DialogButton name="help" className="w-[49px]" size="size-[18px]" />
			</div>
		</div>
	</div>
);

const App: React.FC = () => (
	<div className={`relative flex h-screen flex-col overflow-hidden bg-white ${segoe}`}>
		<div className="flex min-h-0 flex-1 flex-col border-l border-black">
			<TitleBar />
			<div className="flex h-[29px] border-t border-[#b5b5b5] bg-white">
				<ToolGroup label="File and view" blank="w-[205px]" items="newFile open _ zoomIn zoomWin zoomTarget | zoomOutWin zoomOut | binocularBack binocularNext binocularCheck" />
				<ToolGroup label="Graphics view" items="cubeTop cubeFront cubeRight cubeIso" />
				<ToolGroup label="Planes" items="cubeRed v" />
				<ToolGroup label="Shading" items="globe v sphere v redSolid redWire" />
				<ToolGroup label="Delete" items="eraser eraserTwo v | undelete V" />
				<ToolGroup label="Analyze" items="analyzeHelp analyzeChain | analyzeDist orangeTag sigma greenBracket v" />
			</div>
			<div className="flex h-7 border-t border-[#b5b5b5] bg-white">
				<ToolGroup label="Sketcher" blank="w-[192px]" items="plus v plusSmall _" />
				<ToolGroup label="Trim and break" items="trim breakStar v" />
				<ToolGroup label="Transform" items="xfDynamic xfTranslate xfTranslate3D xfMirror xfRotate xfScale xfProject | offset v array roll v" />
				<ToolGroup label="Attributes" items="bulb v levelMove" />
				<ToolGroup label="Surfaces" items="orangeFrame orangeLines revolve sweep extrude v | surfA surfB wireCube | pathA v pathB v pathC v" />
			</div>
			<SelectionRibbon />
			<PromptRibbon />
			<div className="flex min-h-0 flex-1">
				<div className="w-[45px] shrink-0 pr-[5px]">
					<div className="border-b border-[#999] pb-0.5"><ToolColumn label="Solids" items={solids} /></div>
				</div>
				<OperationsPanel />
				<Viewport />
				<aside className="flex w-[29px] shrink-0 flex-col overflow-hidden border-x border-white border-r-black bg-[#f0f0f0]">
					<div className="h-[220px] shrink-0"><ToolColumn label="Recent functions" items={recent} /></div>
					<div className="border-t border-[#aaa]"><ToolColumn label="Quick masks" items={quickMasks} /></div>
				</aside>
			</div>
			<StatusBar />
		</div>
		<Taskbar />
		<VerifyDialog />
		<div className="pointer-events-none absolute top-[249px] left-[219px] size-[89px] rounded-full bg-[#ffff28]/75 mix-blend-multiply" />
		<svg viewBox="0 0 12 19" className="pointer-events-none absolute top-[292px] left-[263px] h-[19px] w-3" aria-hidden="true">
			<path d="M1 1V15L4 12 6.5 17.5 8.5 16.5 6 11.5H10.5Z" fill="#fff" stroke="#222" />
		</svg>
	</div>
);

export default App;
